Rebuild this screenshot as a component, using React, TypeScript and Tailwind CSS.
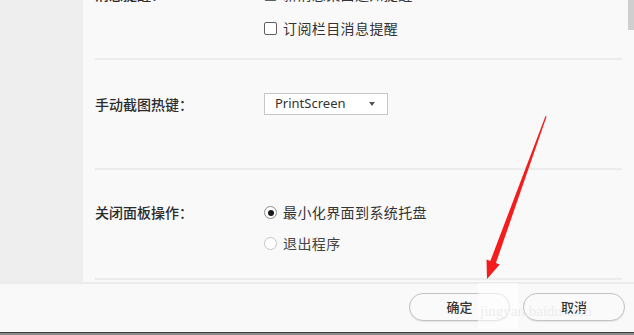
import React from "react";

const font = { fontFamily: '"Noto Sans CJK SC", "Noto Sans", sans-serif' };

function Checkbox() {
  return <span className="inline-block w-[13px] h-[13px] border-[1.5px] border-[#5f5f5f] rounded-[2px] bg-white shrink-0" />;
}

function Radio({ checked }: { checked?: boolean }) {
  return (
    <span
      className={`inline-flex items-center justify-center w-[13px] h-[13px] rounded-full border shrink-0 bg-white ${
        checked ? "border-[#8a8a8a]" : "border-[#c4c4c4]"
      }`}
    >
      {checked && <span className="w-[6px] h-[6px] rounded-full bg-[#1a1a1a]" />}
    </span>
  );
}

function Sep() {
  return <div className="h-[2px] bg-[#ececec]" />;
}

export default function App() {
  return (
    <div className="relative w-[634px] h-[335px] overflow-hidden bg-[#f9f9f9] text-[#333]" style={font}>
      <div className="flex h-[282px]">
        <div className="w-[83px] bg-[#eeeeee]" />
        <div className="flex-1 pl-[12px] pr-[12px] flex flex-col">
          {/* section 1 (partially scrolled out) */}
          <div className="flex -mt-[21px]">
            <div className="w-[169px] text-[14px] font-medium text-[#2b2b2b] h-[30px] flex items-center">消息提醒：</div>
            <div className="flex flex-col">
              <div className="h-[30px] flex items-center gap-[6px] text-[14px] tracking-[0.4px]">
                <Checkbox />
                <span>新消息桌面通知提醒</span>
              </div>
              <div className="h-[34px] pt-[4px] flex items-center gap-[6px] text-[14px] tracking-[0.4px]">
                <Checkbox />
                <span>订阅栏目消息提醒</span>
              </div>
            </div>
          </div>
          <div className="h-[15px]" />
          <Sep />
          {/* section 2 */}
          <div className="flex items-center pt-[33px] pb-[53px]">
            <div className="w-[169px] text-[14px] font-medium text-[#2b2b2b]">手动截图热键：</div>
            <div className="w-[124px] h-[22px] border border-[#c6c6c6] bg-white flex items-center pl-[10px] pr-[12px] justify-between">
              <span className="text-[13px] text-[#333]" style={{ fontFamily: '"Noto Sans", sans-serif' }}>
                PrintScreen
              </span>
              <span className="w-0 h-0 border-l-[3.5px] border-r-[3.5px] border-t-[4px] border-l-transparent border-r-transparent border-t-[#555]" />
            </div>
          </div>
          <Sep />
          {/* section 3 */}
          <div className="flex pt-[27px] pb-[19px]">
            <div className="w-[169px] text-[14px] font-medium text-[#2b2b2b] h-[31px] flex items-center">关闭面板操作：</div>
            <div className="flex flex-col">
              <div className="h-[31px] flex items-center gap-[6px] text-[14px] tracking-[0.4px]">
                <Radio checked />
                <span>最小化界面到系统托盘</span>
              </div>
              <div className="h-[31px] flex items-center gap-[6px] text-[14px] tracking-[0.4px] text-[#444]">
                <Radio />
                <span>退出程序</span>
              </div>
            </div>
          </div>
          <Sep />
        </div>
      </div>
      <div className="h-[2px] bg-[#ebebeb]" />
      {/* footer */}
      <div className="h-[48px] flex items-start justify-end pr-[9px] pt-[9px] gap-[13px]">
        <button className="w-[101px] h-[28px] rounded-full border border-[#c2c2c2] bg-[#fafafa] text-[13px] font-medium text-[#333] shadow-[0_1px_1px_rgba(0,0,0,0.08)]">
          确定
        </button>
        <button className="w-[102px] h-[28px] rounded-full border border-[#c2c2c2] bg-[#fafafa] text-[13px] font-medium text-[#333] shadow-[0_1px_1px_rgba(0,0,0,0.08)]">
          取消
        </button>
      </div>
      <div className="h-[3px] border-t border-[#3f3f3f] bg-[#8a8a8a]" />

      {/* scrollbar thumb */}
      <div className="absolute right-0 top-0 w-[6px] h-[30px] bg-[#cfcfcf]" />

      {/* watermark patch */}
      <div className="absolute left-[478px] top-[283px] w-[40px] h-[46px] bg-white/60" />
      <div className="absolute left-[480px] top-[300px] text-[15px] text-[#ededed]" style={{ fontFamily: '"Liberation Serif", serif' }}>
        jingyan.baidu.com
      </div>

      {/* red arrow */}
      <svg className="absolute left-0 top-0" width="634" height="335" viewBox="0 0 634 335">
        <polygon
          points="545.5,116 546.6,116.4 495.9,263.1 499.7,264.6 487,279 486.5,259.6 490.3,261.1"
          fill="#f41c1c"
        />
      </svg>
    </div>
  );
}
